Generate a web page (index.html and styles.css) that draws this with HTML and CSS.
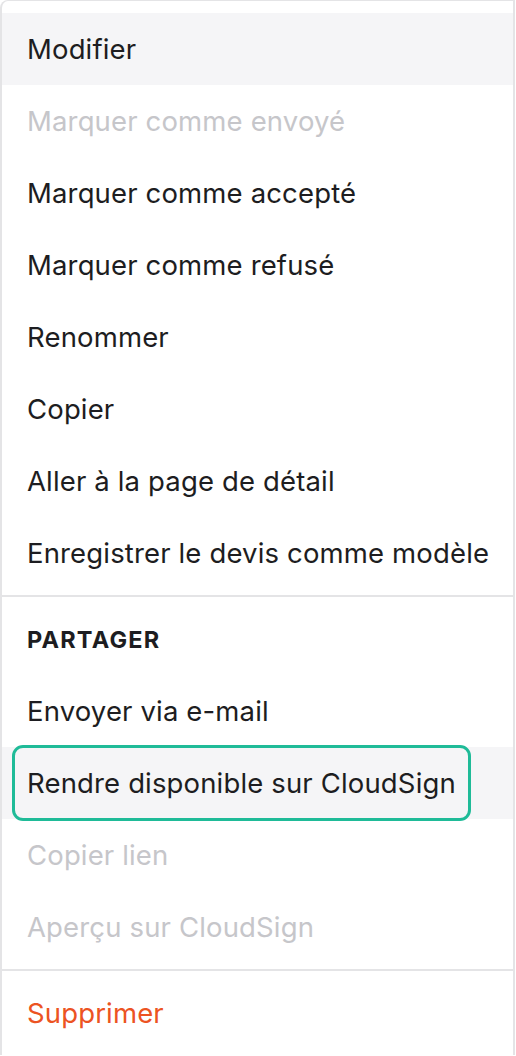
FILE: index.html
```html
<!DOCTYPE html>
<html lang="fr">
<head>
  <meta charset="UTF-8">
  <meta name="viewport" content="width=device-width, initial-scale=1.0">
  <title>Menu devis</title>
  <link rel="stylesheet" href="styles.css">
</head>
<body>
  <div class="menu">
    <ul class="menu-section first">
      <li class="menu-item hover"><span class="menu-label">Modifier</span></li>
      <li class="menu-item disabled"><span class="menu-label">Marquer comme envoyé</span></li>
      <li class="menu-item"><span class="menu-label">Marquer comme accepté</span></li>
      <li class="menu-item"><span class="menu-label">Marquer comme refusé</span></li>
      <li class="menu-item"><span class="menu-label">Renommer</span></li>
      <li class="menu-item"><span class="menu-label">Copier</span></li>
      <li class="menu-item"><span class="menu-label">Aller à la page de détail</span></li>
      <li class="menu-item"><span class="menu-label">Enregistrer le devis comme modèle</span></li>
    </ul>

    <ul class="menu-section">
      <li class="menu-heading">PARTAGER</li>
      <li class="menu-item"><span class="menu-label">Envoyer via e-mail</span></li>
      <li class="menu-item hover"><span class="menu-label focus">Rendre disponible sur CloudSign</span></li>
      <li class="menu-item disabled"><span class="menu-label">Copier lien</span></li>
      <li class="menu-item disabled"><span class="menu-label">Aperçu sur CloudSign</span></li>
    </ul>

    <ul class="menu-section">
      <li class="menu-item danger"><span class="menu-label">Supprimer</span></li>
    </ul>
  </div>
</body>
</html>
```

FILE: styles.css
```css
/* Menu contextuel du devis */
body {
  margin: 0;
  background-color: white;
  font-family: Inter, "Noto Sans", sans-serif;
}

.menu {
  width: 515px;
  box-sizing: border-box;
  border: 2px solid #e4e4e6;
  border-top-width: 1px;
  border-bottom: none;
  border-top-left-radius: 8px;
  background-color: white;
}

.menu-section {
  list-style: none;
  margin: 0;
  padding: 6px 0;
  border-top: 2px solid #e4e4e6;
}

.menu-section.first {
  padding-top: 12px;
  border-top: none;
}

.menu-item {
  height: 72px;
  display: flex;
  align-items: center;
  font-size: 27.5px;
  letter-spacing: 0.15px;
  color: #1d1d21;
}

.menu-item.hover {
  background-color: #f5f5f7;
}

.menu-item.disabled {
  color: #c6c6ca;
}

.menu-item.danger {
  color: #ec5322;
}

.menu-label {
  display: flex;
  align-items: center;
  box-sizing: border-box;
  height: 100%;
  padding: 0 13px 0 25px;
}

/* anneau de focus autour de l'élément sélectionné */
.menu-label.focus {
  margin-left: 12px;
  padding-left: 13px;
  border-radius: 9px;
  outline: 3px solid #1fbb98;
  outline-offset: -1px;
}

.menu-heading {
  height: 72px;
  display: flex;
  align-items: center;
  padding-left: 25px;
  font-size: 23.5px;
  font-weight: 700;
  letter-spacing: 1.2px;
  color: #1d1d21;
}
```
